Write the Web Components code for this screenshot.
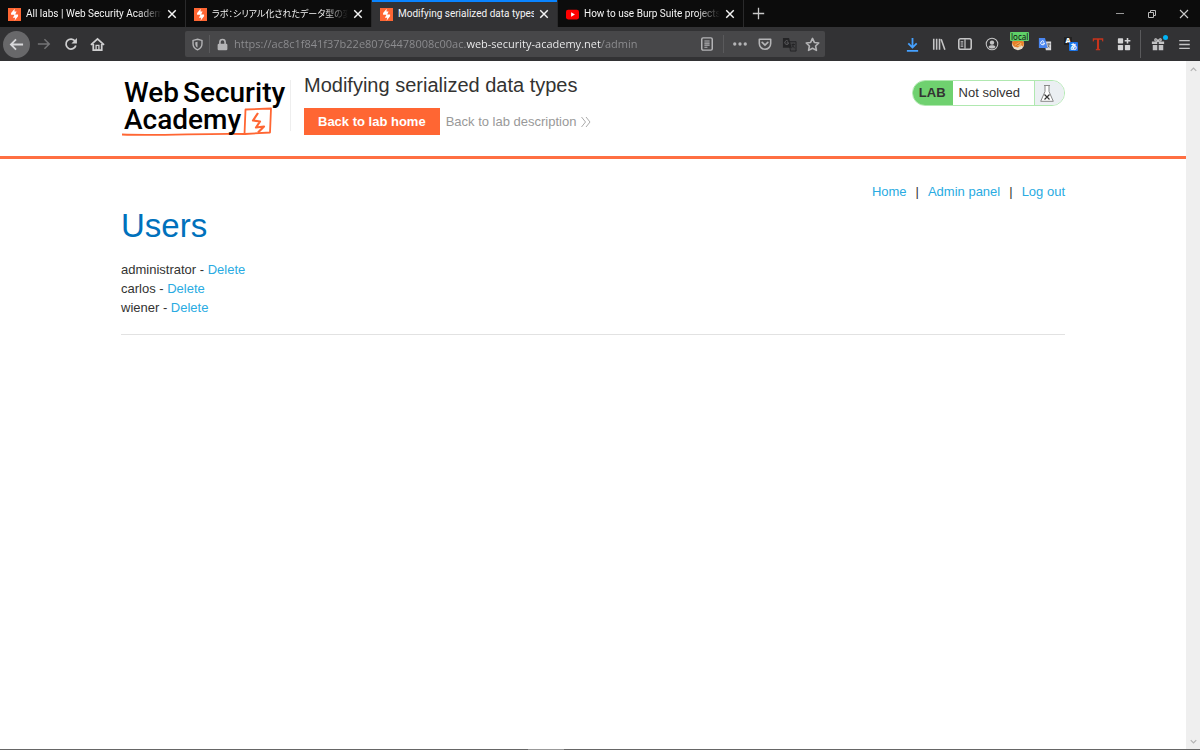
<!DOCTYPE html>
<html lang="en">
<head>
<meta charset="utf-8">
<title>Modifying serialized data types</title>
<style>
body {
  margin: 0;
  font-family: "Liberation Sans", Arial, sans-serif;
  font-size: 13px;
  color: #333332;
  background: #fff;
}
</style>
</head>
<body>

<browser-window>
  <browser-tab slot="tabs" icon="burp">All labs | Web Security Academy</browser-tab>
  <browser-tab slot="tabs" icon="burp" lang="ja">ラボ：シリアル化されたデータ型の変更</browser-tab>
  <browser-tab slot="tabs" icon="burp" active>Modifying serialized data types</browser-tab>
  <browser-tab slot="tabs" icon="youtube">How to use Burp Suite projects</browser-tab>
  <browser-toolbar slot="toolbar"></browser-toolbar>

  <lab-header>
    <academy-logo slot="logo"></academy-logo>
    Modifying serialized data types
    <lab-status slot="status">Not solved</lab-status>
  </lab-header>
  <lab-page>
    <user-row name="administrator"></user-row>
    <user-row name="carlos"></user-row>
    <user-row name="wiener"></user-row>
  </lab-page>
</browser-window>

<script>
(function() {

// all icons, viewBox is 16x16
const icons = {
  burp: `<rect x="0" y="0" width="16" height="16" fill="#ff6633"/><path d="M8.200 1 3.800 6.200v2h4.200L6 12h3L8 15.600l4.400-5.400V8H8.800l1.800-3.600H8z" fill="#fff"/>`,
  youtube: `<rect x="0" y="2" width="16" height="12" rx="2.600" fill="#f00"/><path d="M6.300 5.200v5.600L11 8z" fill="#fff"/>`,
  close: `<path d="M3 3l10 10M13 3L3 13" stroke="#f5f5f5" stroke-width="1.900" fill="none"/>`,
  plus: `<path d="M8 1v14M1 8h14" stroke="#c8c8c8" stroke-width="1.600" fill="none"/>`,
  min: `<path d="M4 7.500h8" stroke="#999" stroke-width="1"/>`,
  restore: `<path d="M4.500 6.500h5v5h-5zM6.500 6V4.500h5v5H10" stroke="#bbb" stroke-width="1" fill="none"/>`,
  winclose: `<path d="M4 4l8 8M12 4l-8 8" stroke="#ccc" stroke-width="1.100" fill="none"/>`,
  back: `<path d="M15 8H2M7.500 2.500L2 8l5.500 5.500" stroke="#d8d8da" stroke-width="1.900" fill="none"/>`,
  forward: `<path d="M1 8h13M8.500 2.500L14 8l-5.500 5.500" stroke="#747476" stroke-width="1.700" fill="none"/>`,
  reload: `<path d="M12.700 4.800A5.700 5.700 0 1 0 13.500 9.600" stroke="#cfcfd0" stroke-width="2" fill="none"/><path d="M14.800 1v6.300H8.500z" fill="#cfcfd0"/>`,
  home: `<path d="M1 8.500L8 2l7 6.500M3.500 7.500V14h9V7.500" stroke="#cfcfd0" stroke-width="1.900" fill="none"/><path d="M6.500 9h3v5h-3z" fill="none" stroke="#cfcfd0" stroke-width="1.400"/>`,
  shield: `<path d="M8 1.500l5.500 1.500v4c0 3.500-2 6-5.500 7.500C4.500 13 2.500 10.500 2.500 7V3z" fill="none" stroke="#b4b4b6" stroke-width="1.700"/><path d="M8 4.500v7.300C6.200 10.700 5.300 9 5.300 7V5.200z" fill="#b4b4b6"/>`,
  lock: `<rect x="2" y="7" width="12" height="8" rx="1.500" fill="#b4b4b6"/><path d="M4.800 7.500V5a3.200 3.200 0 0 1 6.400 0v2.500" fill="none" stroke="#b4b4b6" stroke-width="2"/>`,
  reader: `<rect x="2" y="1" width="12" height="14" rx="1.500" fill="none" stroke="#b4b4b6" stroke-width="1.700"/><path d="M5 4.500h6M5 7h6M5 9.300h6M5 11.700h3.500" stroke="#b4b4b6" stroke-width="1.200"/>`,
  dots: `<circle cx="2" cy="8" r="1.900" fill="#b4b4b6"/><circle cx="8" cy="8" r="1.900" fill="#b4b4b6"/><circle cx="14" cy="8" r="1.900" fill="#b4b4b6"/>`,
  pocket: `<path d="M1.500 2.500h13v5a6.500 6.500 0 0 1-13 0z" fill="none" stroke="#b4b4b6" stroke-width="1.800" stroke-linejoin="round"/><path d="M4.800 6.200L8 9.300l3.200-3.100" fill="none" stroke="#b4b4b6" stroke-width="1.900" stroke-linecap="round"/>`,
  translate: `<path d="M7.500 5H15v10H9z" fill="#414143" stroke="#242426" stroke-width="1"/><path d="M1 1h6.500l2.800 10.500H1z" fill="#242426"/><path d="M6.500 4.600A2 2 0 1 0 7 6.200H5" stroke="#606062" fill="none"/><path d="M10.300 8h3.500M12 7v1c0 2-1 3-1.800 3.500M11 9l2.500 3" stroke="#242426" fill="none"/>`,
  star: `<path d="M8 1.500l2 4.300 4.700.600-3.400 3.200.900 4.700L8 12l-4.200 2.300.900-4.700L1.300 6.400 6 5.800z" fill="none" stroke="#b4b4b6" stroke-width="1.700" stroke-linejoin="round"/>`,
  download: `<path d="M8 1v10M3.500 6.800L8 11.300l4.500-4.500M2 14.800h12" stroke="#45a1ff" stroke-width="1.900" fill="none"/>`,
  library: `<path d="M2 2v12.500M5.300 2v12.500M8.600 2v12.500M10.500 2.500l4.200 12" stroke="#c4c4c5" stroke-width="1.800" fill="none"/>`,
  sidebar: `<rect x=".900" y="2" width="14.200" height="12" rx="2" fill="none" stroke="#c4c4c5" stroke-width="1.800"/><path d="M8 2.500v11M3 5.500h3M3 8h3M3 10.500h3" stroke="#c4c4c5" stroke-width="1.400"/>`,
  account: `<circle cx="8" cy="8" r="6.600" fill="none" stroke="#c4c4c5" stroke-width="1.200"/><circle cx="8" cy="6.400" r="2.500" fill="#c4c4c5"/><path d="M4 11.300c.800-1.500 2.300-1.800 4-1.800s3.200.300 4 1.800C11 12.500 9.600 13 8 13s-3-.500-4-1.700z" fill="#c4c4c5"/>`,
  fox: `<circle cx="8" cy="8" r="7" fill="#e9dcc9"/><path d="M1 6l4-3h6l4 3-1 5-3-2-3 3-4-1-2-2z" fill="#e8812b"/><path d="M4 9l5-3 3 1-1 4-4-1z" fill="#f6b25c"/><path d="M6 9.500l4-2" stroke="#b05a18" stroke-width="1"/>`,
  gtranslate: `<path d="M7 5h8v10H9z" fill="#d9d9dc"/><path d="M1 1h7l3 11.500H1z" fill="#4a86f0"/><path d="M7 5.300A2.200 2.200 0 1 0 7.500 7H5.300" stroke="#fff" stroke-width="1.100" fill="none"/><path d="M10.300 8h4M12.500 7v1c0 2-.500 3-1.300 4M11.300 9.500l2 2.500" stroke="#666" fill="none"/>`,
  ttext: `<path d="M2 1.500h12v3.500h-1L12.300 3.200H9.200v10.300l1.300.5v1H5.500v-1l1.300-.5V3.200H3.700L3 5H2z" fill="#c8341c"/>`,
  grid: `<rect x="1" y="1.500" width="6" height="6" rx=".8" fill="#d4d4d5"/><rect x="1" y="9" width="6" height="6" rx=".8" fill="#d4d4d5"/><rect x="9" y="9" width="6" height="6" rx=".8" fill="#d4d4d5"/><path d="M12 1v6.500M8.800 4.300h6.500" stroke="#d4d4d5" stroke-width="1.800"/>`,
  gift: `<path d="M1 5h6.200v3H1zM8.800 5H15v3H8.800zM2 9h5.200v6H2zM8.800 9H14v6H8.800z" fill="#c4c4c5"/><path d="M7.700 5C5 5 4 4 4.400 2.800 5 1.500 7.300 2 7.700 5zM8.300 5c2.700 0 3.700-1 3.300-2.200C11 1.500 8.700 2 8.300 5z" fill="none" stroke="#c4c4c5" stroke-width="1.400"/>`,
  menu: `<path d="M1.500 3.200h13M1.500 8h13M1.500 12.800h13" stroke="#c4c4c5" stroke-width="1.700"/>`,
  up: `<path d="M4 10l4-4 4 4" stroke="#b4b4b4" stroke-width="1.800" fill="none"/>`,
  down: `<path d="M4 6l4 4 4-4" stroke="#b4b4b4" stroke-width="1.800" fill="none"/>`
};

function icon(name, size) {
  return `<svg viewBox="0 0 16 16" width="${size}" height="${size}" aria-hidden="true">${icons[name]}</svg>`;
}

const buttonCss = `
button {
  display: flex;
  align-items: center;
  justify-content: center;
  padding: 0;
  border: 0;
  background: none;
  font: inherit;
  color: inherit;
  cursor: pointer;
}
svg {display: block; flex: none;}
`;

class BrowserWindow extends HTMLElement {
  constructor() {
    super();
    this.attachShadow({mode: 'open'}).innerHTML = `
<style>
:host {display: flex; flex-direction: column; min-height: 100vh;}
${buttonCss}
.tabs {
  display: flex;
  height: 27px;
  background: #0c0c0c;
  font-family: Roboto, "Noto Sans CJK JP", sans-serif;
}
.new {width: 28px;}
.controls {display: flex; margin-left: auto;}
.controls button {width: 32px;}
.view {display: flex; flex: 1;}
main {flex: 1; min-width: 0;}
.scroll {
  display: flex;
  flex-direction: column;
  justify-content: space-between;
  width: 14px;
  background: #efefef;
}
.scroll button {width: 14px; height: 16px;}
.edge {
  height: 1px;
  background: linear-gradient(90deg, #666 44%, #999 44%, #999 47%, #666 47%);
}
</style>
<div class="tabs">
  <slot name="tabs"></slot>
  <button class="new" aria-label="New tab">${icon('plus', 13)}</button>
  <div class="controls">
    <button aria-label="Minimize">${icon('min', 16)}</button>
    <button aria-label="Restore">${icon('restore', 16)}</button>
    <button aria-label="Close window">${icon('winclose', 16)}</button>
  </div>
</div>
<slot name="toolbar"></slot>
<div class="view">
  <main><slot></slot></main>
  <div class="scroll">
    <button aria-label="Scroll up">${icon('up', 11)}</button>
    <button aria-label="Scroll down">${icon('down', 11)}</button>
  </div>
</div>
<div class="edge"></div>`;
  }
}

class BrowserTab extends HTMLElement {
  constructor() {
    super();
    this.attachShadow({mode: 'open'});
  }

  connectedCallback() {
    this.shadowRoot.innerHTML = `
<style>
:host {
  display: flex;
  align-items: center;
  box-sizing: border-box;
  flex: 0 1 186px;
  min-width: 0;
  padding: 1px 5px 0 8px;
  border-right: 1px solid #2a2a2b;
  font-size: 10px;
  color: #f4f4f4;
}
:host([lang=ja]) {font-size: 9px; font-feature-settings: "palt";}
:host([active]) {
  background: #323234;
  box-shadow: inset 0 2px #0a84ff;
}
${buttonCss}
.title {
  flex: 1;
  min-width: 0;
  margin-left: 5px;
  overflow: hidden;
  white-space: nowrap;
  line-height: 16px;
  -webkit-mask-image: linear-gradient(90deg, #000 calc(100% - 24px), transparent);
  mask-image: linear-gradient(90deg, #000 calc(100% - 24px), transparent);
}
:host([active]) .title {-webkit-mask-image: none; mask-image: none;}
.close {width: 16px; height: 16px; margin-left: 2px;}
</style>
${icon(this.getAttribute('icon'), 13)}
<span class="title"><slot></slot></span>
<button class="close" aria-label="Close tab">${icon('close', 12)}</button>`;
  }
}

class BrowserToolbar extends HTMLElement {
  constructor() {
    super();
    this.attachShadow({mode: 'open'}).innerHTML = `
<style>
:host {
  display: flex;
  align-items: center;
  height: 34px;
  background: #323234;
  font-family: "Noto Sans", sans-serif;
}
${buttonCss}
.nav {display: flex; padding-left: 3px;}
.nav button {width: 27px; height: 27px;}
.nav .back {border-radius: 50%; background: #68686a;}
.url {
  display: flex;
  align-items: center;
  flex: 1;
  min-width: 0;
  height: 26px;
  margin: 0 74px;
  border-radius: 2px;
  background: #474749;
}
.url button {width: 24px; height: 26px;}
.url .reader {margin-right: 4px;}
.url .dots {width: 26px; margin-left: 3px;}
.url .star {width: 22px; margin-right: 2px;}
.line {width: 1px; height: 18px; background: #5a5a5c;}
/* the host name is lit, the rest of the address is dimmed */
input {
  flex: 1;
  min-width: 0;
  height: 20px;
  padding: 0;
  border: 0;
  outline: 0;
  font: 11px/20px "Open Sans", sans-serif;
  color: #97979a;
  background: linear-gradient(90deg, #8e8e91 var(--host-start), #f4f4f5 var(--host-start), #f4f4f5 var(--host-end), #8e8e91 var(--host-end));
  -webkit-background-clip: text;
  background-clip: text;
  -webkit-text-fill-color: transparent;
}
.extensions {display: flex; justify-content: space-between; width: 238px;}
.extensions button, .end button {width: 26px; height: 26px;}
.end {display: flex; align-items: center; margin-left: 3px; padding-right: 3px;}
.end .line {height: 28px; margin-right: 4px;}
.badged {position: relative;}
.badge {
  position: absolute;
  top: 1px;
  left: 5px;
  padding: 0 1px;
  border-radius: 1px;
  background: #5fd068;
  font-size: 8px;
  line-height: 9px;
  color: #111;
}
.dot {
  position: absolute;
  top: 4px;
  right: 3px;
  width: 5px;
  height: 5px;
  border-radius: 50%;
  background: #00b3f4;
}
.kana {
  position: relative;
  width: 14px;
  height: 14px;
  font-family: "Noto Sans", "Noto Sans CJK JP", sans-serif;
  font-weight: bold;
  color: #fff;
}
.kana b, .kana i {position: absolute; font-style: normal; text-align: center;}
.kana b {left: 0; top: 0; width: 8px; font-size: 7px; line-height: 8px; background: #222;}
.kana i {right: 0; bottom: 0; width: 9px; border-radius: 1px; font-size: 7px; line-height: 9px; background: #1a73e8;}
</style>
<div class="nav">
  <button class="back" aria-label="Back">${icon('back', 15)}</button>
  <button aria-label="Forward">${icon('forward', 14)}</button>
  <button aria-label="Reload">${icon('reload', 14)}</button>
  <button aria-label="Home">${icon('home', 15)}</button>
</div>
<div class="url">
  <button aria-label="Tracking protection">${icon('shield', 13)}</button>
  <span class="line"></span>
  <button aria-label="Site security">${icon('lock', 13)}</button>
  <input type="text" aria-label="Address" spellcheck="false" value="https://ac8c1f841f37b22e80764478008c00ac.web-security-academy.net/admin">
  <button class="reader" aria-label="Reader view">${icon('reader', 14)}</button>
  <span class="line"></span>
  <button class="dots" aria-label="Page actions">${icon('dots', 14)}</button>
  <button aria-label="Save to Pocket">${icon('pocket', 14)}</button>
  <button aria-label="Translate page">${icon('translate', 15)}</button>
  <button class="star" aria-label="Bookmark">${icon('star', 15)}</button>
</div>
<div class="extensions">
  <button aria-label="Downloads">${icon('download', 15)}</button>
  <button aria-label="Library">${icon('library', 14)}</button>
  <button aria-label="Sidebars">${icon('sidebar', 14)}</button>
  <button aria-label="Account">${icon('account', 14)}</button>
  <button class="badged" aria-label="Proxy: local">${icon('fox', 14)}<span class="badge">local</span></button>
  <button aria-label="Google Translate">${icon('gtranslate', 14)}</button>
  <button aria-label="Translate text"><span class="kana"><b>A</b><i>あ</i></span></button>
  <button aria-label="Text">${icon('ttext', 14)}</button>
  <button aria-label="Add-ons">${icon('grid', 14)}</button>
</div>
<div class="end">
  <span class="line"></span>
  <button class="badged" aria-label="What's new">${icon('gift', 14)}<span class="dot"></span></button>
  <button aria-label="Menu">${icon('menu', 13)}</button>
</div>`;
  }

  connectedCallback() {
    this.markHost();
  }

  // measures the address so the gradient stops fall on the host name
  markHost() {
    const input = this.shadowRoot.querySelector('input');
    const style = getComputedStyle(input);
    const ctx = document.createElement('canvas').getContext('2d');
    ctx.font = style.fontSize + ' ' + style.fontFamily;
    const start = input.value.indexOf('.') + 1;
    const end = input.value.lastIndexOf('/');
    input.style.setProperty('--host-start', ctx.measureText(input.value.slice(0, start)).width + 'px');
    input.style.setProperty('--host-end', ctx.measureText(input.value.slice(0, end)).width + 'px');
  }
}

class AcademyLogo extends HTMLElement {
  constructor() {
    super();
    this.attachShadow({mode: 'open'}).innerHTML = `
<style>
:host {display: block;}
a {
  display: grid;
  width: 169px;
  height: 60px;
  color: #000;
  text-decoration: none;
}
svg, .name {grid-area: 1 / 1;}
.name {
  z-index: 1;
  padding: 2px 0 0 3px;
  font: 500 28px/27px Roboto, sans-serif;
  white-space: nowrap;
}
.line {display: flex; gap: 4px;}
</style>
<a href="#" aria-label="Web Security Academy">
  <svg viewBox="0 0 168 60" width="168" height="60" fill="none" stroke="#ff6633" stroke-width="1.8" stroke-linejoin="round" aria-hidden="true">
    <path d="M1 57.500C40 59 85 56 123.500 57L124.500 32.500 150 31.500 149 55.500 124 57"/>
    <path d="M137 36L132 43.500 139 44.500 135 50.500 143 49.500 137 55.500" stroke-width="2.200"/>
  </svg>
  <span class="name">
    <span class="line"><span>Web</span><span>Security</span></span>
    <span class="line">Academy</span>
  </span>
</a>`;
  }
}

class LabStatus extends HTMLElement {
  constructor() {
    super();
    this.attachShadow({mode: 'open'}).innerHTML = `
<style>
:host {
  display: flex;
  box-sizing: border-box;
  height: 26px;
  border: 1px solid #b0e8b0;
  border-radius: 13px;
  overflow: hidden;
  line-height: 24px;
}
.lab {
  margin: -1px 0 -1px -1px;
  padding: 1px 7px;
  background: #6fd16f;
  font-weight: bold;
}
.text {padding: 0 14px 0 6px;}
.flask {
  display: flex;
  align-items: center;
  width: 24px;
  padding-left: 5px;
  border-left: 1px solid #b0e8b0;
  background: #ebeff2;
}
</style>
<span class="lab">LAB</span>
<span class="text"><slot></slot></span>
<span class="flask">
  <svg viewBox="0 0 14 17" width="14" height="17" fill="#fff" stroke="#888" aria-hidden="true">
    <path d="M4 .500h6M5 .500v6L.700 16.300h12.600L9 6.500v-6"/>
    <path d="M4.500 9.500l5 5M9.500 9.500l-5 5" stroke="#333" stroke-width="1.200"/>
  </svg>
</span>`;
  }
}

class LabHeader extends HTMLElement {
  constructor() {
    super();
    this.attachShadow({mode: 'open'}).innerHTML = `
<style>
:host {display: block; border-bottom: 3px solid #ff6f42;}
.container {
  display: flex;
  align-items: flex-start;
  box-sizing: border-box;
  max-width: 944px;
  min-height: 95px;
  margin: 0 auto;
  padding-top: 16px;
}
.title {
  margin: 3px 0 0 0;
  padding-left: 13px;
  border-left: 1px solid #eee;
  height: 51px;
}
h2 {
  margin: 0 0 11px;
  margin-top: -6px;
  font-size: 20px;
  font-weight: normal;
  line-height: 23px;
}
.links {display: flex; align-items: center; gap: 6px;}
.home {
  padding: 0 14px;
  background: #ff6633;
  color: #fff;
  font-weight: bold;
  line-height: 27px;
  text-decoration: none;
}
.description {
  display: flex;
  align-items: center;
  gap: 5px;
  color: #999;
  text-decoration: none;
}
slot[name=status] {display: block; margin: 3px 0 0 auto;}
</style>
<div class="container">
  <slot name="logo"></slot>
  <div class="title">
    <h2><slot></slot></h2>
    <div class="links">
      <a class="home" href="#">Back to lab home</a>
      <a class="description" href="#">Back to lab description
        <svg viewBox="0 0 10 10" width="10" height="10" fill="none" stroke="#aaa" aria-hidden="true"><path d="M.500 0l4 5-4 5M5 0l4 5-4 5"/></svg>
      </a>
    </div>
  </div>
  <slot name="status"></slot>
</div>`;
  }
}

class LabPage extends HTMLElement {
  constructor() {
    super();
    this.attachShadow({mode: 'open'}).innerHTML = `
<style>
:host {
  display: block;
  max-width: 944px;
  margin: 0 auto;
  padding-top: 23px;
  line-height: 19px;
}
nav {display: flex; justify-content: flex-end; gap: 9px;}
a {color: #29abe2; text-decoration: none;}
h1 {
  margin: 6px 0 15px;
  font-size: 33px;
  font-weight: normal;
  line-height: 38px;
  color: #0071bc;
}
hr {margin: 17px 0 0; border: 0; border-top: 1px solid #e2e2e2;}
</style>
<nav>
  <a href="#">Home</a><span>|</span>
  <a href="#">Admin panel</a><span>|</span>
  <a href="#">Log out</a>
</nav>
<h1>Users</h1>
<slot></slot>
<hr>`;
  }
}

class UserRow extends HTMLElement {
  constructor() {
    super();
    this.attachShadow({mode: 'open'});
  }

  connectedCallback() {
    this.shadowRoot.innerHTML = `
<style>
:host {display: block;}
a {color: #29abe2; text-decoration: none;}
</style>
<span>${this.getAttribute('name')} - </span><a href="#">Delete</a>`;
  }
}

window.customElements.define('browser-window', BrowserWindow);
window.customElements.define('browser-tab', BrowserTab);
window.customElements.define('browser-toolbar', BrowserToolbar);
window.customElements.define('academy-logo', AcademyLogo);
window.customElements.define('lab-status', LabStatus);
window.customElements.define('lab-header', LabHeader);
window.customElements.define('lab-page', LabPage);
window.customElements.define('user-row', UserRow);
})();
</script>
</body>
</html>
